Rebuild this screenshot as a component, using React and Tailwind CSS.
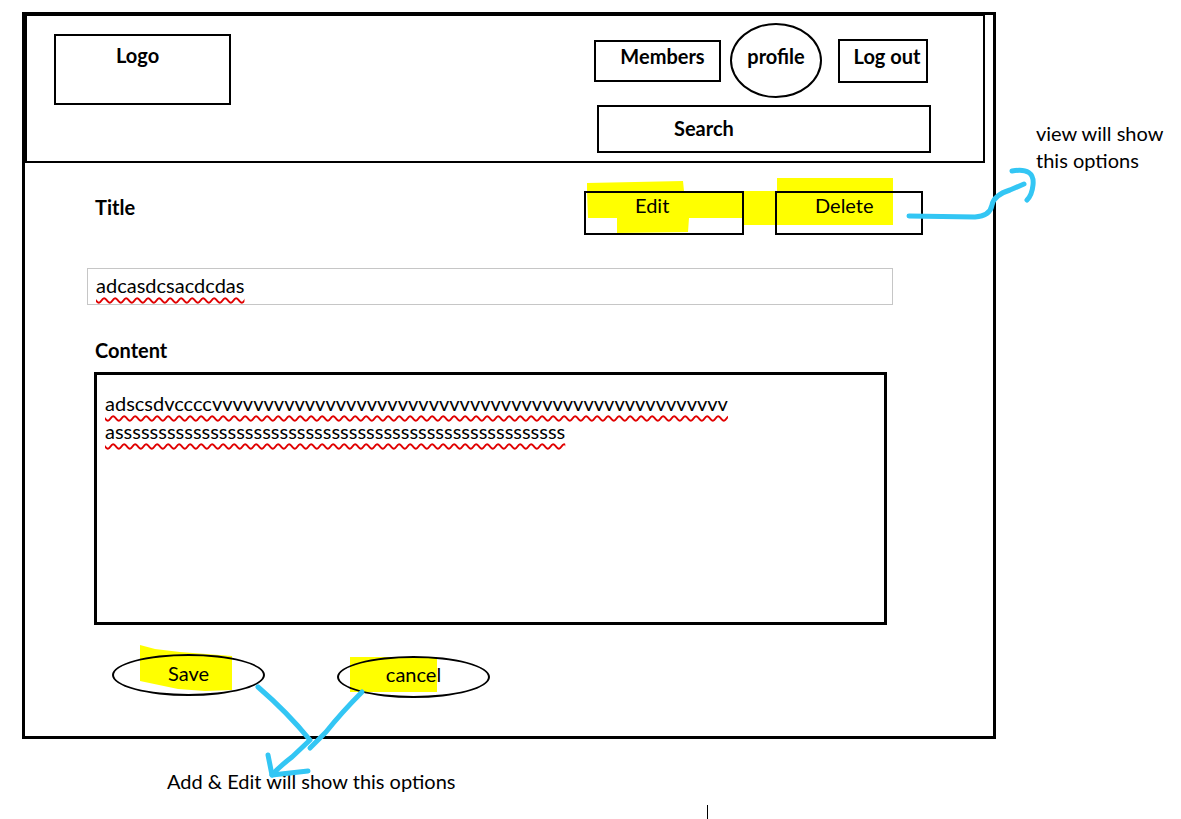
import React from "react";

const squiggle =
  "underline decoration-wavy decoration-[#e00000] decoration-[1.5px] underline-offset-[4px]";

export default function App() {
  const line1 = "adscsdv" + "cccc" + "v".repeat(50);
  const line2 = "a" + "s".repeat(52);
  return (
    <div className="relative w-[1181px] h-[819px] bg-white overflow-hidden font-['Lato',sans-serif] text-[20px] leading-[26px] text-black">
      {/* yellow highlighter strokes (under the drawing) */}
      <svg className="absolute left-0 top-0 z-0" width="1181" height="819">
        <g fill="#ffff00">
          <polygon points="587,183 683,181 684,191 777,191 777,178 893,178 893,225 777,225 744,225 744,218 689,218 688,232 617,233 617,218 588,218 587,191" />
          <polygon points="140,645 155,649 180,652 232,656 232,690 205,691 178,689 140,681" />
          <polygon points="350,657 437,657 437,692 350,692" />
        </g>
      </svg>

      <div className="relative z-10 flex items-start pl-[22px] pt-[12px]">
        {/* page frame */}
        <div className="flex flex-col">
          <div className="w-[974px] h-[727px] border-[3px] border-black flex flex-col">
            {/* header */}
            <div className="w-[960px] h-[149px] -mt-px border-2 border-black flex items-start">
              <div className="ml-[27px] mt-[18px] w-[177px] h-[71px] border-2 border-black pl-[60px] pt-[6px] font-bold">
                Logo
              </div>
              <div className="ml-auto mr-[52px] mt-[7px] w-[337px] flex flex-col">
                <div className="flex items-center font-bold">
                  <div className="w-[127px] h-[42px] border-2 border-black flex items-center justify-center pl-[10px] pb-[9px]">
                    Members
                  </div>
                  <div className="ml-[9px] w-[92px] h-[75px] border-2 border-black rounded-[50%] flex items-center justify-center pb-[9px]">
                    profile
                  </div>
                  <div className="ml-[16px] w-[90px] h-[44px] border-2 border-black flex items-center justify-center pl-[8px] pb-[9px]">
                    Log out
                  </div>
                </div>
                <div className="mt-[7px] ml-[3px] w-[334px] h-[48px] border-2 border-black flex items-center pl-[75px] pb-[2px] font-bold">
                  Search
                </div>
              </div>
            </div>

            {/* body */}
            <div className="flex items-start mt-[28px]">
              <div className="ml-[70px] w-[489px] pt-[3px] font-bold">Title</div>
              <div className="w-[160px] h-[44px] border-2 border-black pl-[49px] leading-[24px]">Edit</div>
              <div className="ml-[31px] w-[148px] h-[44px] border-2 border-black pl-[38px] leading-[24px]">Delete</div>
            </div>

            <div className="mt-[33px] ml-[62px] w-[806px] h-[37px] border border-[#c6c6c6] flex items-center pl-[8px] pb-[3px]">
              <span className={squiggle}>adcasdcsacdcdas</span>
            </div>

            <div className="mt-[32px] ml-[70px] font-bold">Content</div>

            <div className="mt-[9px] ml-[69px] w-[793px] h-[253px] border-[3px] border-black pl-[8px] pt-[14px] leading-[28px]">
              <div>
                <span className={squiggle}>{line1}</span>
              </div>
              <div>
                <span className={squiggle}>{line2}</span>
              </div>
            </div>

            <div className="flex items-start mt-[29px]">
              <div className="ml-[87px] w-[153px] h-[42px] border-2 border-black rounded-[50%] flex items-center justify-center pb-[5px]">
                Save
              </div>
              <div className="ml-[72px] mt-[2px] w-[153px] h-[42px] border-2 border-black rounded-[50%] flex items-center justify-center pb-[7px]">
                cancel
              </div>
            </div>
          </div>
          <div className="mt-[29px] ml-[145px]">Add &amp; Edit will show this options</div>
        </div>

        <div className="ml-[40px] mt-[108px] leading-[27px]">
          view will show
          <br />
          this options
        </div>
      </div>

      {/* blue annotation arrows */}
      <svg className="absolute left-0 top-0 z-20 pointer-events-none" width="1181" height="819">
        <g fill="none" stroke="#33c6f4" strokeWidth="5" strokeLinecap="round" strokeLinejoin="round">
          <path d="M909 216 L975 217 Q990 216 992 205 Q994 195 1010 190 L1024 184" />
          <path d="M1012 171 Q1035 167 1033 185 Q1032 195 1027 200" />
          <path d="M258 687 Q287 712 310 740 L292 757 Q279 767 272 775" />
          <path d="M268 755 L272 775 L308 771" />
          <path d="M362 692 Q342 712 326 732 L310 748" />
        </g>
      </svg>

      {/* text cursor */}
      <div className="absolute left-[707px] top-[805px] w-px h-[14px] bg-black" />
    </div>
  );
}
